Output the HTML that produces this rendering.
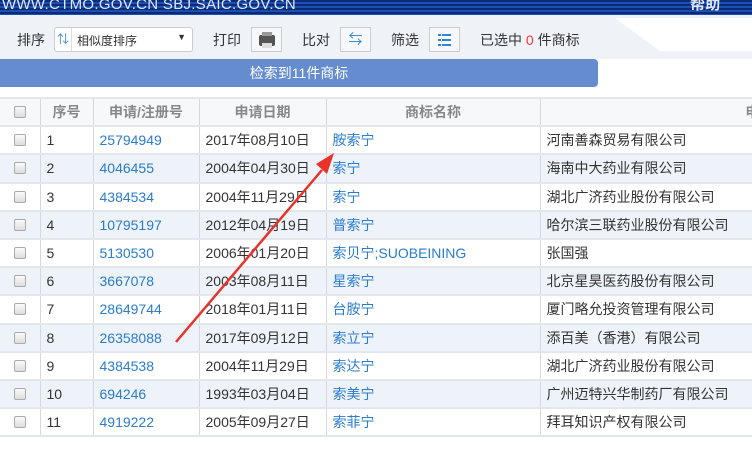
<!DOCTYPE html>
<html><head><meta charset="utf-8">
<style>
*{margin:0;padding:0;box-sizing:border-box}
body{width:752px;height:462px;overflow:hidden;background:#fff;font-family:"Liberation Sans","Noto Sans CJK SC",sans-serif;font-size:14px;color:#333;position:relative}
.top{position:absolute;left:0;top:0;width:752px;height:15px;background:repeating-linear-gradient(#0a2a7a 0 2px,#1d4fb0 2px 4px);color:#dfe8ff;font-size:15px;line-height:10px;overflow:hidden;padding-left:2px;letter-spacing:0.3px}
.tb{position:absolute;left:0;top:15px;width:752px;height:44px;background:#eff3f8}
.wh{position:absolute;left:615px;top:18px;width:137px;height:33px;background:#fff;clip-path:polygon(0 0,100% 0,100% 100%,45px 100%)}
.t{position:absolute;font-size:14px;color:#333;top:30px}
.sel{position:absolute;left:54px;top:27px;width:139px;height:25px;border:1px solid #ccc;border-radius:3px;background:#fff}
.btn{position:absolute;top:27px;width:31px;height:25px;border:1px solid #ccc;background:#f6f8fb}
.bar{position:absolute;left:0;top:59px;width:598px;height:28px;background:#648cce;border-radius:0 4px 4px 0;color:#fff;text-align:center;line-height:28px;font-size:14px}
table{position:absolute;left:0;top:97px;border-collapse:collapse;table-layout:fixed;width:800px}
td,th{height:28.2px;border-right:1px solid #d8d8d8;border-bottom:2px solid #e3e6ea;padding-left:6px;white-space:nowrap;overflow:hidden;font-weight:normal;text-align:left;font-size:14px}
th{color:#888;font-weight:bold;text-align:center;padding:0;background:#f7f8fa;border-top:2px solid #e3e6ea}
tr:nth-child(odd) td{background:#eef3f9}
.a{color:#2a7ccc}
.cb{display:block;width:12px;height:12px;border:1px solid #aaa;border-radius:2px;background:linear-gradient(#fafafa,#ddd);margin:0 auto}
td:first-child{padding:0}
</style></head><body>
<div class="top">WWW.CTMO.GOV.CN SBJ.SAIC.GOV.CN<span style="position:absolute;left:690px;top:0;font-weight:bold">帮助</span></div>
<div class="tb"></div>
<div class="wh"></div>
<div class="t" style="left:17px">排序</div>
<div class="sel"><span style="position:absolute;left:0;top:0;width:17px;height:23px;border-right:1px solid #ddd;color:#3a8ad6;font-size:12px;text-align:center;line-height:23px">⇅</span><span style="position:absolute;left:22px;top:4px;font-size:12px">相似度排序</span><span style="position:absolute;right:6px;top:4px;font-size:9px">▼</span></div>
<div class="t" style="left:213px">打印</div>
<div class="btn" style="left:251px"><span style="position:absolute;left:7px;top:7px;width:16px;height:11px;background:#555;border-radius:2px"></span><span style="position:absolute;left:10px;top:4px;width:10px;height:4px;background:#999"></span><span style="position:absolute;left:10px;top:15px;width:10px;height:5px;background:#ddd"></span></div>
<div class="t" style="left:302px">比对</div>
<div class="btn" style="left:340px;color:#3a8ad6;text-align:center;line-height:23px">⇆</div>
<div class="t" style="left:391px">筛选</div>
<div class="btn" style="left:429px"><svg width="29" height="23"><g fill="#2f86d9"><rect x="8" y="6" width="3" height="2"/><rect x="12" y="6" width="9" height="2"/><rect x="8" y="11" width="3" height="2"/><rect x="12" y="11" width="9" height="2"/><rect x="8" y="16" width="3" height="2"/><rect x="12" y="16" width="9" height="2"/></g></svg></div>
<div class="t" style="left:480px">已选中 <span style="color:#f33">0</span> 件商标</div>
<div class="bar">检索到11件商标</div>
<table>
<colgroup><col style="width:40px"><col style="width:53px"><col style="width:106px"><col style="width:127px"><col style="width:214px"><col style="width:260px"></colgroup>
<tr><th><span class="cb"></span></th><th>序号</th><th>申请/注册号</th><th>申请日期</th><th>商标名称</th><th style="text-align:left;padding-left:205px">申请</th></tr>
<tr><td><span class="cb"></span></td><td>1</td><td class="a">25794949</td><td>2017年08月10日</td><td class="a">胺索宁</td><td>河南善森贸易有限公司</td></tr>
<tr><td><span class="cb"></span></td><td>2</td><td class="a">4046455</td><td>2004年04月30日</td><td class="a">索宁</td><td>海南中大药业有限公司</td></tr>
<tr><td><span class="cb"></span></td><td>3</td><td class="a">4384534</td><td>2004年11月29日</td><td class="a">索宁</td><td>湖北广济药业股份有限公司</td></tr>
<tr><td><span class="cb"></span></td><td>4</td><td class="a">10795197</td><td>2012年04月19日</td><td class="a">普索宁</td><td>哈尔滨三联药业股份有限公司</td></tr>
<tr><td><span class="cb"></span></td><td>5</td><td class="a">5130530</td><td>2006年01月20日</td><td class="a">索贝宁;SUOBEINING</td><td>张国强</td></tr>
<tr><td><span class="cb"></span></td><td>6</td><td class="a">3667078</td><td>2003年08月11日</td><td class="a">星索宁</td><td>北京星昊医药股份有限公司</td></tr>
<tr><td><span class="cb"></span></td><td>7</td><td class="a">28649744</td><td>2018年01月11日</td><td class="a">台胺宁</td><td>厦门略允投资管理有限公司</td></tr>
<tr><td><span class="cb"></span></td><td>8</td><td class="a">26358088</td><td>2017年09月12日</td><td class="a">索立宁</td><td>添百美（香港）有限公司</td></tr>
<tr><td><span class="cb"></span></td><td>9</td><td class="a">4384538</td><td>2004年11月29日</td><td class="a">索达宁</td><td>湖北广济药业股份有限公司</td></tr>
<tr><td><span class="cb"></span></td><td>10</td><td class="a">694246</td><td>1993年03月04日</td><td class="a">索美宁</td><td>广州迈特兴华制药厂有限公司</td></tr>
<tr><td><span class="cb"></span></td><td>11</td><td class="a">4919222</td><td>2005年09月27日</td><td class="a">索菲宁</td><td>拜耳知识产权有限公司</td></tr>
</table>
<svg style="position:absolute;left:0;top:0" width="752" height="462"><line x1="176" y1="342" x2="322" y2="170" stroke="#e8322a" stroke-width="2.5"/><polygon points="334,153 316,164 327,174" fill="#e8322a"/></svg>
</body></html>
